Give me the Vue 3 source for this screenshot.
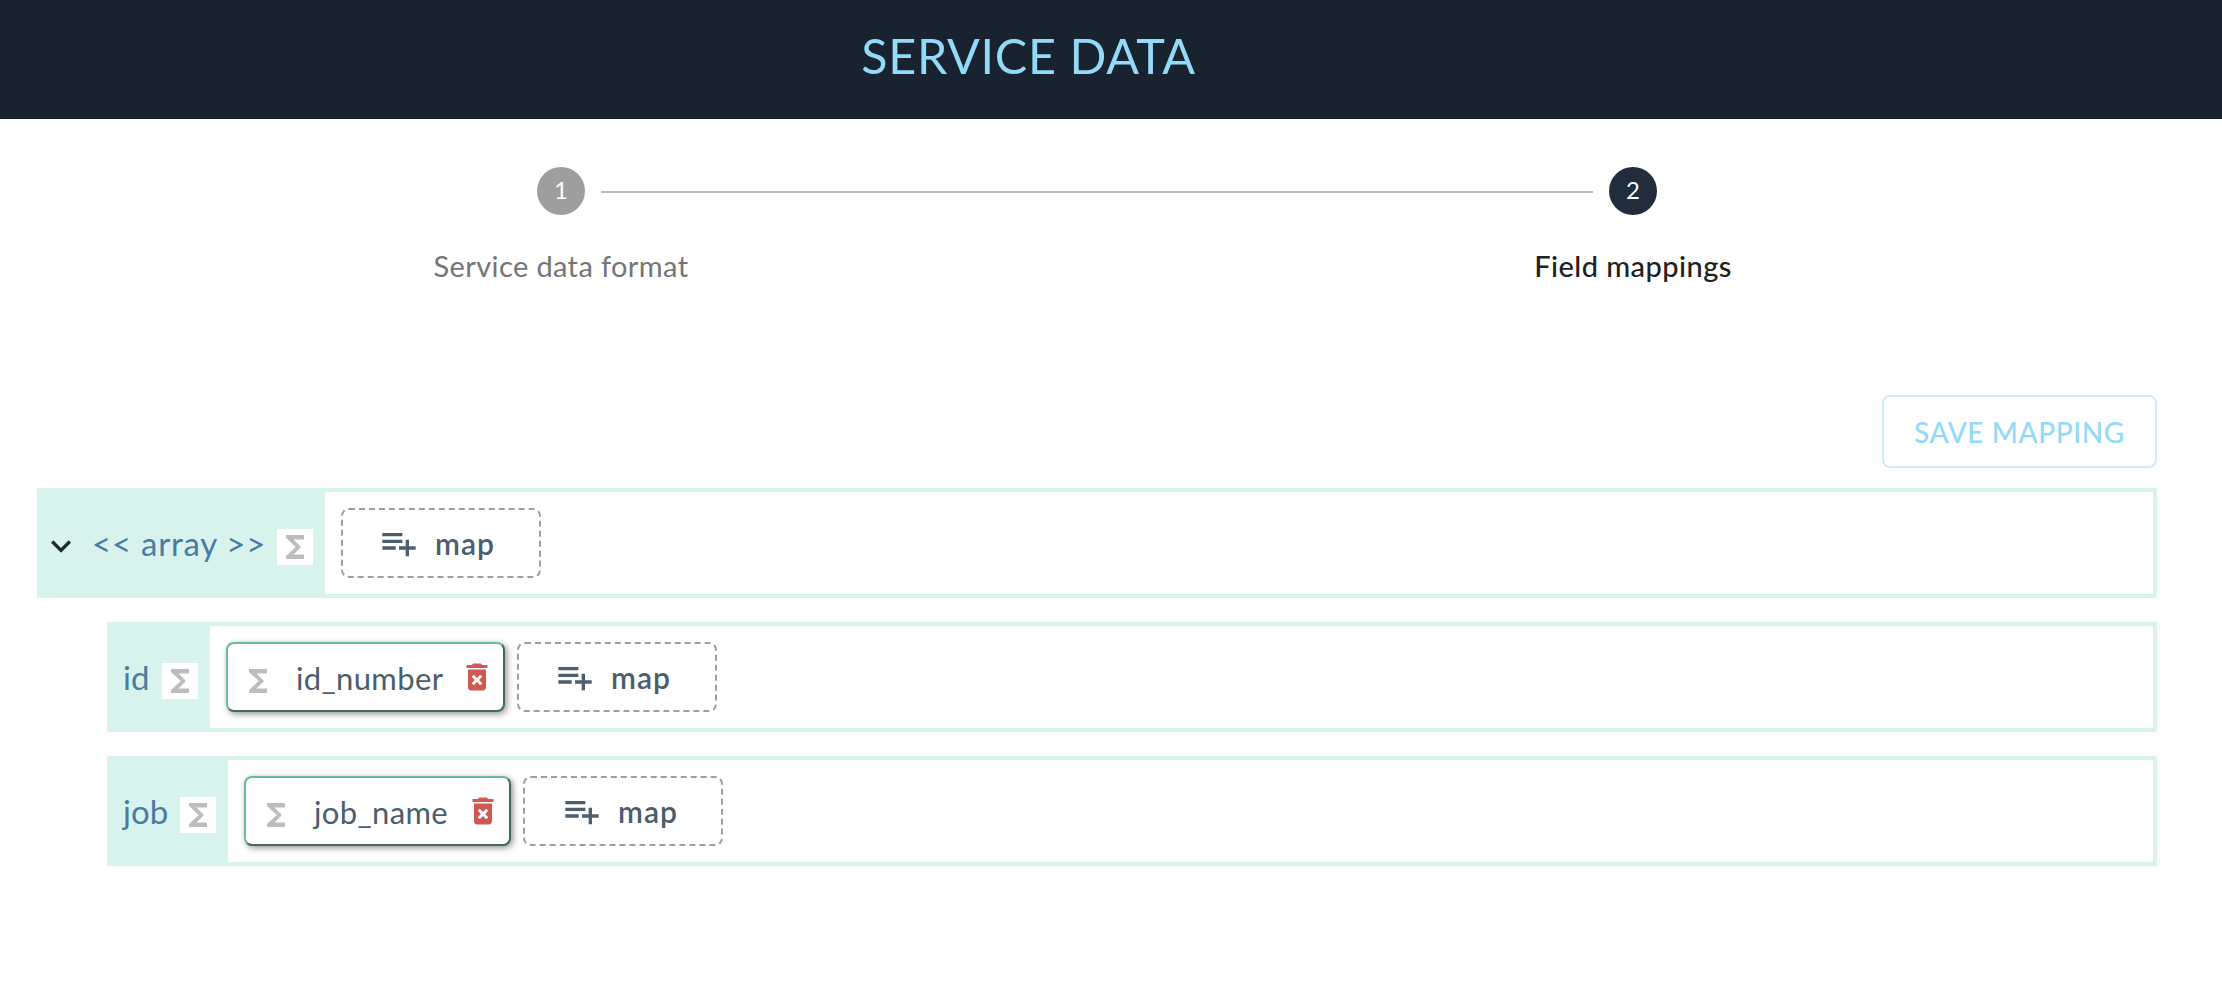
<script setup>
const rows = [
  { name: '<< array >>', kind: 'array', expandable: true, mapped: null },
  { name: 'id', kind: 'id', expandable: false, mapped: 'id_number' },
  { name: 'job', kind: 'job', expandable: false, mapped: 'job_name' },
]
const sigma = 'M18 4H6v2l6.5 6L6 18v2h12v-3h-7l5-5-5-5h7z'
</script>

<template>
  <div class="page">
    <header class="topbar"><h1>SERVICE DATA</h1></header>

    <div class="stepper">
      <div class="step">
        <div class="dot">1</div>
        <div class="caption">Service data format</div>
      </div>
      <div class="connector"></div>
      <div class="step active">
        <div class="dot">2</div>
        <div class="caption">Field mappings</div>
      </div>
    </div>

    <main class="content">
      <button class="save">SAVE MAPPING</button>

      <div
        v-for="row in rows"
        :key="row.kind"
        class="row"
        :class="[row.kind, { child: !row.expandable }]"
      >
        <div class="label">
          <svg v-if="row.expandable" class="chevron" viewBox="0 0 24 24">
            <path d="M16.59 8.59 12 13.17 7.41 8.59 6 10l6 6 6-6z" />
          </svg>
          <span class="name">{{ row.name }}</span>
          <span class="sigma-box">
            <svg class="sigma" viewBox="0 0 24 24"><path :d="sigma" /></svg>
          </span>
        </div>
        <div class="targets">
          <div v-if="row.mapped" class="chip">
            <svg class="sigma" viewBox="0 0 24 24"><path :d="sigma" /></svg>
            <span class="field">{{ row.mapped }}</span>
            <svg class="trash" viewBox="0 0 24 24">
              <path
                d="M6 19c0 1.1.9 2 2 2h8c1.1 0 2-.9 2-2V7H6v12zm2.46-7.12l1.41-1.41L12 12.59l2.12-2.12 1.41 1.41L13.41 14l2.12 2.12-1.41 1.41L12 15.41l-2.12 2.12-1.41-1.41L10.59 14l-2.13-2.12zM15.5 4l-1-1h-5l-1 1H5v2h14V4z"
              />
            </svg>
          </div>
          <button class="map">
            <svg class="add" viewBox="0 0 24 24">
              <path d="M14 10H2v2h12v-2zm0-4H2v2h12V6zm4 8v-4h-2v4h-4v2h4v4h2v-4h4v-2h-4zM2 16h8v-2H2v2z" />
            </svg>
            <span>map</span>
          </button>
        </div>
      </div>
    </main>
  </div>
</template>

<style>
body {
  background: #fff;
}
</style>

<style scoped>
.page {
  height: 986px;
  overflow: hidden;
  font-family: Lato, "Open Sans", sans-serif;
}
.page * {
  box-sizing: border-box;
}
svg {
  display: block;
  flex: none;
  fill: currentColor;
}
button {
  margin: 0;
  padding: 0;
  background: none;
  font-family: inherit;
}
.topbar {
  height: 119px;
  padding: 0 165px 10px 0;
  display: flex;
  align-items: center;
  justify-content: center;
  background: #19232f;
}
h1 {
  margin: 0;
  font-size: 48.5px;
  font-weight: 400;
  letter-spacing: 0.65px;
  color: #93d9f8;
}
.stepper {
  display: flex;
  justify-content: center;
  padding: 48px 28px 0 0;
  height: 276px;
}
.step {
  width: 48px;
  display: flex;
  flex-direction: column;
  align-items: center;
  color: #757575;
}
.dot {
  width: 48px;
  height: 48px;
  border-radius: 50%;
  background: #9e9e9e;
  color: #fff;
  font-size: 24px;
  line-height: 46px;
  text-align: center;
}
.caption {
  margin-top: 34px;
  font-size: 29px;
  line-height: 34px;
  letter-spacing: 0.38px;
  white-space: nowrap;
}
.active {
  color: #212121;
}
.active .dot {
  background: #212c3c;
}
.active .caption {
  font-weight: 500;
  letter-spacing: 0.45px;
}
.connector {
  width: 992px;
  height: 2px;
  margin: 24px 16px 0;
  background: #bdbdbd;
}
.content {
  padding: 0 65px 0 37px;
  display: flex;
  flex-direction: column;
}
.save {
  align-self: flex-end;
  width: 275px;
  height: 73px;
  border: 2px solid #c9edfc;
  border-radius: 8px;
  margin-bottom: 20px;
  font-size: 28px;
  font-weight: 500;
  letter-spacing: 0.6px;
  color: #93d9f8;
}
.row {
  display: flex;
  height: 110px;
  border: 4px solid #d8f3ed;
  margin-bottom: 24px;
}
.child {
  margin-left: 70px;
}
.label {
  display: flex;
  align-items: center;
  padding: 0 12px;
  background: #d8f3ed;
  color: #4a7ba3;
  font-size: 33px;
}
.array .label {
  padding-left: 0;
}
.name {
  white-space: nowrap;
}
.array .name {
  width: 185px;
  letter-spacing: 0.75px;
}
.id .name {
  width: 39px;
}
.job .name {
  width: 57px;
}
.chevron {
  width: 40px;
  height: 40px;
  margin: 5px 11px 0 0;
  color: #222a31;
}
.sigma-box {
  margin-top: 8px;
  background: #fff;
}
.sigma {
  width: 36px;
  height: 36px;
  color: #bdbdbd;
}
.targets {
  flex: 1;
  display: flex;
  align-items: center;
  gap: 12px;
  padding-left: 16px;
  background: #fff;
}
.chip {
  display: flex;
  align-items: center;
  height: 70px;
  padding: 0 8px 0 12px;
  border: 2px solid;
  border-color: #6ab9a5 #40695f #40695f #6ab9a5;
  border-radius: 8px;
  box-shadow: 2px 2px 6px rgba(0, 0, 0, 0.42);
  background: #fff;
  color: #4a5e6d;
}
.chip .sigma {
  margin-top: 8px;
}
.field {
  margin-left: 20px;
  padding-top: 2px;
  width: 163px;
  font-size: 31px;
  letter-spacing: 0.35px;
  white-space: nowrap;
}
.job .field {
  width: 151px;
}
.trash {
  width: 36px;
  height: 36px;
  color: #cf5852;
}
.map {
  width: 200px;
  height: 70px;
  display: flex;
  align-items: center;
  padding-left: 36px;
  border: 2px dashed #9e9e9e;
  border-radius: 8px;
  color: #4a5e6d;
  font-size: 30px;
  font-weight: 600;
  letter-spacing: 1px;
}
.job .map {
  padding-left: 37px;
}
.add {
  width: 40px;
  height: 40px;
  margin-right: 16px;
}
</style>
